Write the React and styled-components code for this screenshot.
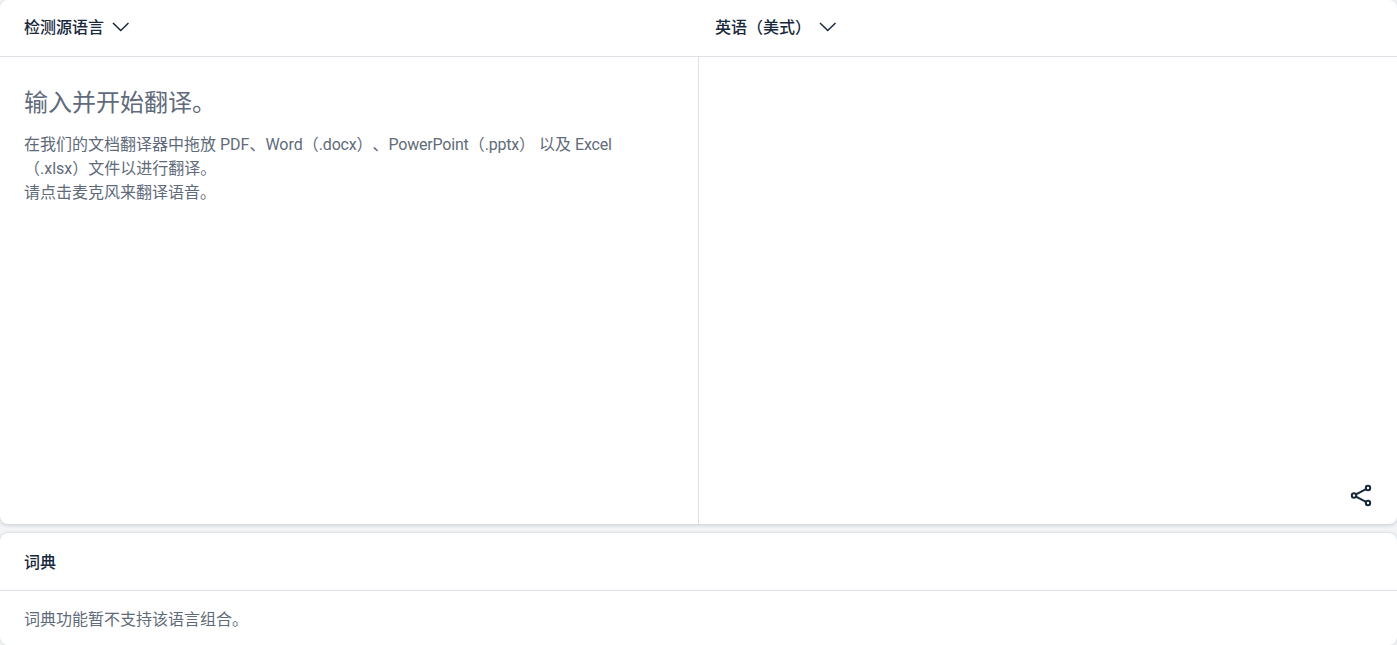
import styled, { createGlobalStyle } from "styled-components";

const fontStack = `Roboto, "Noto Sans CJK SC", sans-serif`;

const GlobalStyle = createGlobalStyle`
  html, body {
    margin: 0;
    padding: 0;
    background: #f2f4f6;
    font-family: ${fontStack};
    text-spacing-trim: space-all;
  }
`;

const Page = styled.div`
  display: flex;
  flex-direction: column;
  gap: 9px;
  width: 1397px;
  height: 645px;
  overflow: hidden;
`;

const TranslatorCard = styled.section`
  display: flex;
  flex-direction: column;
  height: 524px;
  flex-shrink: 0;
  background: #ffffff;
  border-radius: 8px;
  box-shadow: 0 1px 4px rgba(25, 40, 60, 0.2);
`;

const LanguageBar = styled.div`
  display: flex;
  height: 57px;
  box-sizing: border-box;
  flex-shrink: 0;
  padding-bottom: 4px;
  border-bottom: 1px solid #dde2e8;
`;

const LanguageSlot = styled.div`
  display: flex;
  align-items: center;
  width: ${(p) => p.$width};
  padding-left: ${(p) => p.$inset};
  box-sizing: border-box;
`;

const LanguageButton = styled.button`
  display: flex;
  align-items: center;
  gap: 8px;
  padding: 0;
  border: 0;
  background: none;
  color: #17283c;
  font-family: inherit;
  font-size: 16px;
  font-weight: 500;
`;

const ChevronIcon = styled.svg`
  width: 17px;
  height: 10px;
  margin-top: 2px;
`;

const Panes = styled.div`
  display: flex;
  flex: 1;
  min-height: 0;
`;

const SourcePane = styled.div`
  width: 699px;
  box-sizing: border-box;
  padding: 25px 80px 0 24px;
  border-right: 1px solid #dde2e8;
`;

const Placeholder = styled.h1`
  margin: 0 0 9px;
  color: #5f6b7a;
  font-size: 24px;
  font-weight: 400;
  line-height: 42px;
`;

const Hint = styled.p`
  margin: 0;
  color: #5f6b7a;
  font-size: 16px;
  line-height: 24px;
`;

const Latin = styled.span`
  letter-spacing: -0.2px;
`;

const TargetPane = styled.div`
  display: flex;
  flex: 1;
  align-items: flex-end;
  justify-content: flex-end;
  padding: 0 24px 17px 0;
`;

const IconButton = styled.button`
  display: flex;
  padding: 0;
  border: 0;
  background: none;
  color: #17283c;
`;

const DictionaryCard = styled.section`
  flex: 1;
  background: #ffffff;
  border-radius: 8px;
  box-shadow: 0 0 3px rgba(25, 40, 60, 0.2);
`;

const DictionaryTitle = styled.h2`
  display: flex;
  align-items: center;
  height: 58px;
  box-sizing: border-box;
  margin: 0;
  padding: 0 0 2px 24px;
  border-bottom: 1px solid #dde2e8;
  color: #17283c;
  font-size: 16px;
  font-weight: 500;
`;

const DictionaryBody = styled.p`
  margin: 0;
  padding: 17px 24px 0;
  color: #5f6b7a;
  font-size: 16px;
  line-height: 24px;
`;

const Chevron = () => (
  <ChevronIcon viewBox="0 0 17 10" fill="none" stroke="currentColor" strokeWidth="1.5">
    <path d="M1 1 L8.75 8.5 L16.5 1" />
  </ChevronIcon>
);

const ShareIcon = () => (
  <svg width="24" height="24" viewBox="0 0 24 24" fill="none" stroke="currentColor" strokeWidth="2">
    <circle cx="19" cy="5" r="2.2" />
    <circle cx="5" cy="12.5" r="2.2" />
    <circle cx="19" cy="20" r="2.2" />
    <path d="M7 11.4 L17 6.1 M7 13.6 L17 18.9" />
  </svg>
);

export default function App() {
  return (
    <Page>
      <GlobalStyle />
      <TranslatorCard>
        <LanguageBar>
          <LanguageSlot $width="699px" $inset="24px">
            <LanguageButton>
              检测源语言
              <Chevron />
            </LanguageButton>
          </LanguageSlot>
          <LanguageSlot $width="698px" $inset="16px">
            <LanguageButton>
              英语（美式）
              <Chevron />
            </LanguageButton>
          </LanguageSlot>
        </LanguageBar>
        <Panes>
          <SourcePane>
            <Placeholder>输入并开始翻译。</Placeholder>
            <Hint>
              在我们的文档翻译器中拖放 PDF、Word（<Latin>.docx</Latin>）、<Latin>PowerPoint</Latin>（<Latin>.pptx</Latin>） 以及 <Latin>Excel</Latin>（.xlsx）文件以进行翻译。
              <br />
              请点击麦克风来翻译语音。
            </Hint>
          </SourcePane>
          <TargetPane>
            <IconButton>
              <ShareIcon />
            </IconButton>
          </TargetPane>
        </Panes>
      </TranslatorCard>
      <DictionaryCard>
        <DictionaryTitle>词典</DictionaryTitle>
        <DictionaryBody>词典功能暂不支持该语言组合。</DictionaryBody>
      </DictionaryCard>
    </Page>
  );
}
